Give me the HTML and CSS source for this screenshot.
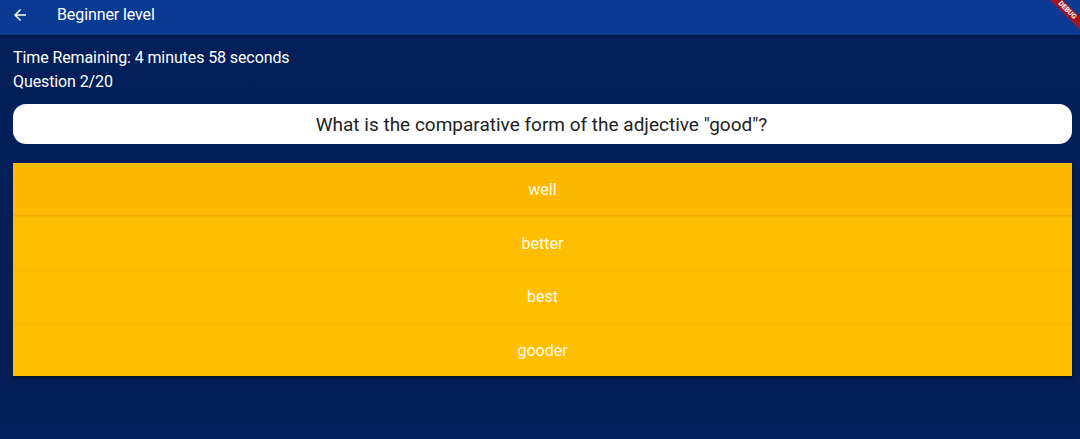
FILE: index.html
```html
<!DOCTYPE html>
<html>
<head>
<meta charset="utf-8">
<link rel="stylesheet" href="styles.css">
</head>
<body>
<div class="app">
  <header class="appbar">
    <svg class="back" width="18" height="18" viewBox="0 0 24 24"><path d="M20 11H7.83l5.59-5.59L12 4l-8 8 8 8 1.41-1.41L7.83 13H20v-2z" fill="#fff"/></svg>
    <span class="title">Beginner level</span>
    <div class="debug"><span>DEBUG</span></div>
  </header>
  <main class="content">
    <div class="info">Time Remaining: 4 minutes 58 seconds</div>
    <div class="info">Question 2/20</div>
    <div class="question">What is the comparative form of the adjective "good"?</div>
    <div class="options">
      <div class="option first">well</div>
      <div class="option">better</div>
      <div class="option">best</div>
      <div class="option">gooder</div>
    </div>
  </main>
</div>
</body>
</html>
```
FILE: styles.css
```css
* { box-sizing: border-box; }
html, body { margin: 0; padding: 0; }
body {
  width: 1080px;
  height: 439px;
  overflow: hidden;
  background: #03205a;
  font-family: Roboto, "Noto Sans", sans-serif;
}
.app { display: flex; flex-direction: column; height: 439px; }
.appbar {
  position: relative;
  height: 35px;
  background: #0b3a92;
  display: flex;
  align-items: center;
  padding-left: 11px;
  padding-bottom: 6px;
  overflow: hidden;
  box-shadow: 0 1px 3px rgba(0,0,0,0.3);
}
.back { flex: none; }
.title {
  color: #fff;
  font-size: 16px;
  margin-left: 28px;
  letter-spacing: -0.1px;
}
.debug {
  position: absolute;
  top: 0;
  right: 0;
  width: 60px;
  height: 60px;
  overflow: hidden;
}
.debug span {
  position: absolute;
  top: 6px;
  right: -22px;
  width: 70px;
  transform: rotate(45deg);
  background: #a31320;
  color: #fff;
  font-size: 7px;
  font-weight: bold;
  text-align: center;
  line-height: 9px;
}
.content {
  flex: 1;
  padding: 11px 8px 0 13px;
  background: linear-gradient(#03205a, #041e55 80%, #03205c);
}
.info {
  color: #fff;
  font-size: 16px;
  line-height: 24px;
  letter-spacing: -0.1px;
}
.question {
  margin-top: 10px;
  width: 1059px;
  height: 40px;
  background: #fff;
  border-radius: 13px;
  color: #222;
  font-size: 19px;
  display: flex;
  align-items: center;
  justify-content: center;
  padding-right: 2px;
}
.options {
  margin-top: 19px;
  width: 1059px;
  display: flex;
  flex-direction: column;
  box-shadow: 0 2px 3px rgba(0,0,0,0.5);
}
.option {
  height: 53.3px;
  background: #ffbf00;
  color: #fffbe8;
  font-size: 16px;
  display: flex;
  align-items: center;
  justify-content: center;
  border-top: 1px solid rgba(230,160,0,0.25);
}
.option.first {
  background: #fdb800;
  border-top: none;
  border-bottom: 1px solid rgba(220,150,0,0.4);
}
```
